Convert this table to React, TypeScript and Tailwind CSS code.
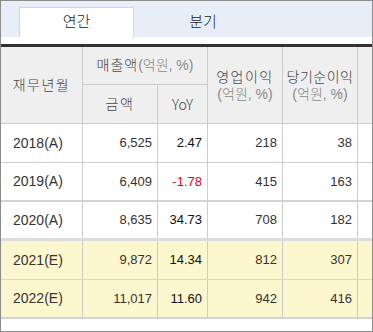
import React from "react";

type Row = {
  period: string;
  sales: string;
  yoy: string;
  op: string;
  net: string;
  estimate?: boolean;
  divider?: string;
};

const ROWS: Row[] = [
  { period: "2018(A)", sales: "6,525", yoy: "2.47", op: "218", net: "38", divider: "border-b border-[#cccccc]" },
  { period: "2019(A)", sales: "6,409", yoy: "-1.78", op: "415", net: "163", divider: "border-b-2 border-[#d2d2d2]" },
  { period: "2020(A)", sales: "8,635", yoy: "34.73", op: "708", net: "182", divider: "border-b-[3px] border-[#dcdcdc]" },
  { period: "2021(E)", sales: "9,872", yoy: "14.34", op: "812", net: "307", estimate: true, divider: "border-b border-[#d6d6d6]" },
  { period: "2022(E)", sales: "11,017", yoy: "11.60", op: "942", net: "416", estimate: true, divider: "border-b-2 border-[#d2d2d2]" },
];

const cols = "grid grid-cols-[82px_75px_50px_75px_75px_1fr]";

export default function App() {
  return (
    <div
      className="w-[373px] h-[332px] border border-[#8c8c8c] bg-white text-[#333] overflow-hidden"
      style={{ fontFamily: '"Liberation Sans", "Noto Sans CJK KR", sans-serif' }}
    >
      {/* tabs */}
      <div className="h-[36px] bg-[#e8eef8] pt-[6px] pl-[18px] flex">
        <div className="w-[115px] h-[30px] bg-white border-l border-t border-r border-[#d0d7e2] flex items-center justify-center text-[15px] text-[#222] font-light">
          연간
        </div>
        <div className="w-[138px] h-[30px] flex items-center justify-center text-[15px] text-[#222] font-light">분기</div>
      </div>
      <div className="h-[7px]" />
      <div className="h-[3px] bg-[#333333]" />

      {/* header */}
      <div className={`${cols} grid-rows-[38px_39px] bg-[#efefef] text-[14px] font-light text-[#444]`}>
        <div className="row-span-2 border-r border-b border-[#cccccc] flex items-center justify-center tracking-[1.5px]">
          재무년월
        </div>
        <div className="col-span-2 border-r border-b border-[#cccccc] flex items-center justify-center tracking-[1px]">
          매출액<span className="text-[#888] tracking-normal">(억원, %)</span>
        </div>
        <div className="row-span-2 border-r border-b border-[#cccccc] flex flex-col items-center justify-center leading-[17px] pt-[1px]">
          <span className="tracking-[1.5px]">영업이익</span>
          <span className="text-[#888]">(억원, %)</span>
        </div>
        <div className="row-span-2 border-r border-b border-[#cccccc] flex flex-col items-center justify-center leading-[17px] pt-[1px]">
          <span className="tracking-[0.5px]">당기순이익</span>
          <span className="text-[#888]">(억원, %)</span>
        </div>
        <div className="row-span-2 border-b border-[#cccccc]" />
        <div className="border-r border-b border-[#cccccc] flex items-center justify-center tracking-[1.5px]">금액</div>
        <div
          className="border-r border-b border-[#cccccc] flex items-center justify-center"
          style={{ fontFamily: '"Noto Sans CJK KR", sans-serif' }}
        >
          YoY
        </div>
      </div>

      {/* body */}
      {ROWS.map((r) => (
        <div
          key={r.period}
          className={`${cols} h-[39px] ${r.divider} ${r.estimate ? "bg-[#fdf7d0]" : "bg-white"}`}
        >
          <div className="border-r border-[#cccccc] flex items-center pl-[12px] text-[14px]">{r.period}</div>
          <div className="border-r border-[#cccccc] flex items-center justify-end pr-[5px] text-[13px]">{r.sales}</div>
          <div
            className={`border-r border-[#cccccc] flex items-center justify-end pr-[5px] text-[13px] ${
              r.yoy.startsWith("-") ? "text-[#e60012]" : "text-[#111]"
            }`}
          >
            {r.yoy}
          </div>
          <div className="border-r border-[#cccccc] flex items-center justify-end pr-[5px] text-[13px]">{r.op}</div>
          <div className="border-r border-[#cccccc] flex items-center justify-end pr-[5px] text-[13px]">{r.net}</div>
          <div />
        </div>
      ))}
    </div>
  );
}
